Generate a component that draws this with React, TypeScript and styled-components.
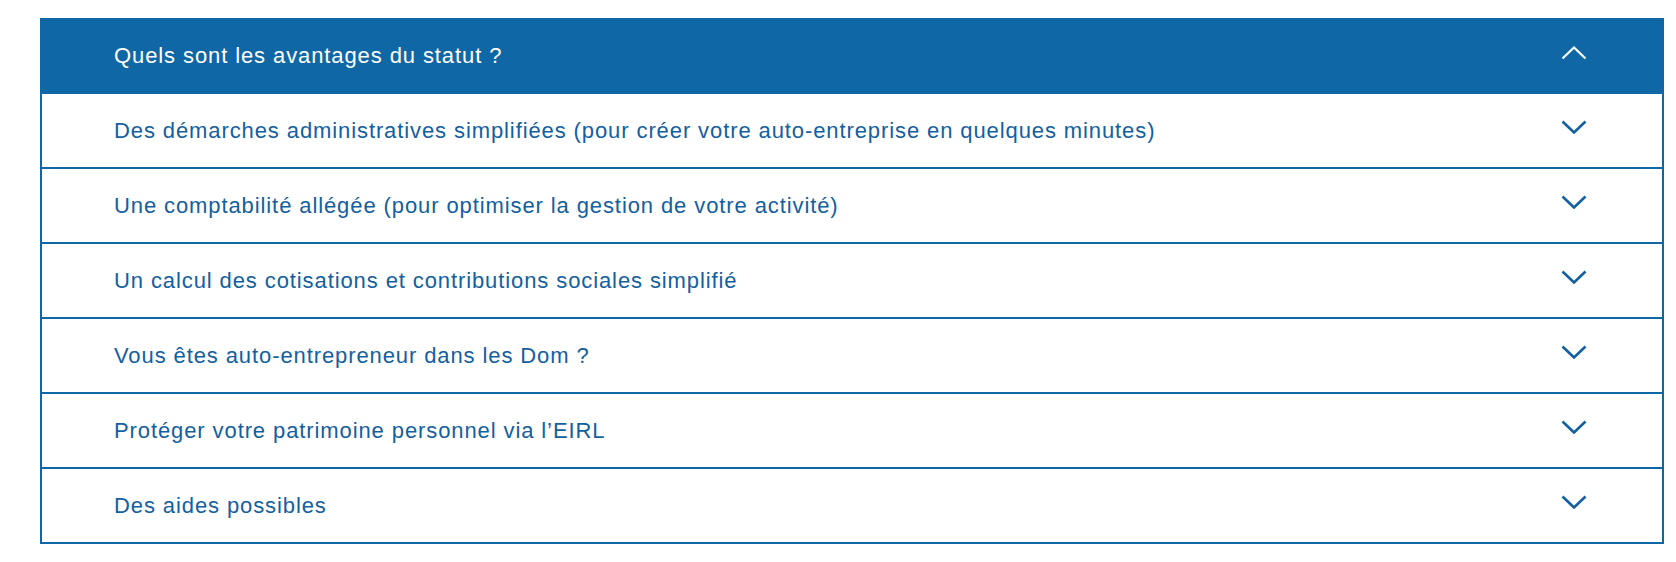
import React, { useState } from "react";
import styled, { createGlobalStyle } from "styled-components";

const Global = createGlobalStyle`
  html, body { margin: 0; padding: 0; background: #ffffff; }
  body { font-family: "Liberation Sans", Arial, Helvetica, sans-serif; }
`;

const Page = styled.div`
  padding: 18px 12px 18px 40px;
`;

const Accordion = styled.section`
  width: 1624px;
  display: flex;
  flex-direction: column;
`;

const Header = styled.button`
  display: flex;
  align-items: center;
  justify-content: space-between;
  height: 76px;
  padding: 0 77px 0 74px;
  margin: 0;
  border: none;
  background: #0f67a6;
  color: #ffffff;
  font-family: "Liberation Sans", Arial, sans-serif;
  font-size: 22px;
  letter-spacing: 0.9px;
  text-align: left;
  cursor: pointer;
`;

const List = styled.ul`
  list-style: none;
  margin: 0;
  padding: 0;
  border: 2px solid #0f67a6;
  border-top: none;
`;

const Item = styled.li<{ $last: boolean }>`
  display: flex;
  align-items: center;
  justify-content: space-between;
  height: 73px;
  padding: 0 75px 0 72px;
  border-bottom: ${(p) => (p.$last ? "none" : "2px solid #0f67a6")};
  color: #13609f;
  font-size: 22px;
  letter-spacing: 0.9px;
  cursor: pointer;
`;

const Label = styled.span`
  line-height: 1;
`;

const Chevron = styled.svg`
  width: 26px;
  height: 14px;
  margin-bottom: 7px;
  flex-shrink: 0;
`;

const ChevronIcon = ({ up, color }: { up?: boolean; color: string }) => (
  <Chevron viewBox="0 0 26 14">
    <polyline
      points={up ? "1.5,12.5 13,1.5 24.5,12.5" : "1.5,1.5 13,12.5 24.5,1.5"}
      fill="none"
      stroke={color}
      strokeWidth={up ? 2.2 : 2.6}
    />
  </Chevron>
);

const items = [
  "Des démarches administratives simplifiées (pour créer votre auto-entreprise en quelques minutes)",
  "Une comptabilité allégée (pour optimiser la gestion de votre activité)",
  "Un calcul des cotisations et contributions sociales simplifié",
  "Vous êtes auto-entrepreneur dans les Dom ?",
  "Protéger votre patrimoine personnel via l’EIRL",
  "Des aides possibles",
];

export default function App() {
  const [open, setOpen] = useState(true);
  return (
    <>
      <Global />
      <Page>
        <Accordion>
          <Header onClick={() => setOpen(!open)}>
            <Label>Quels sont les avantages du statut ?</Label>
            <ChevronIcon up={open} color="#ffffff" />
          </Header>
          {open && (
            <List>
              {items.map((t, i) => (
                <Item key={t} $last={i === items.length - 1}>
                  <Label>{t}</Label>
                  <ChevronIcon color="#13609f" />
                </Item>
              ))}
            </List>
          )}
        </Accordion>
      </Page>
    </>
  );
}
